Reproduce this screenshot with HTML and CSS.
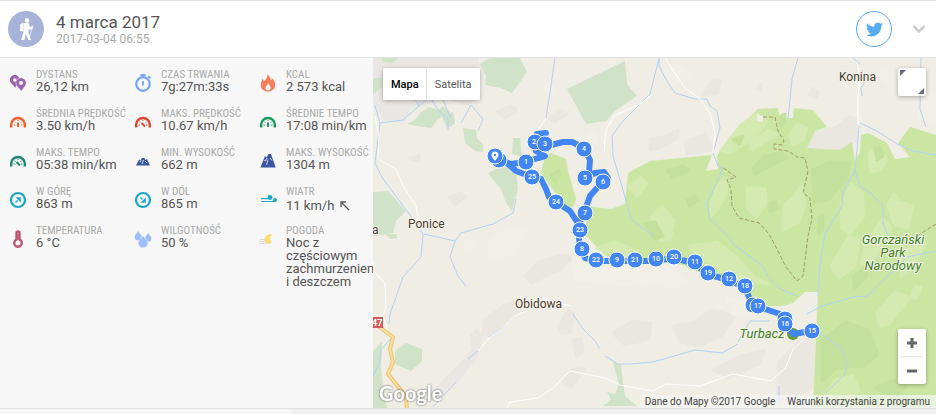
FILE: index.html
```html
<!DOCTYPE html>
<html lang="pl">
<head>
    <meta charset="UTF-8">
    <meta name="viewport" content="width=device-width, initial-scale=1.0">
    <title>4 marca 2017</title>
    <link rel="stylesheet" href="styles.css">
</head>
<body>
    <!-- Header -->
    <header class="header">
        <div class="avatar">
            <svg width="36" height="36" viewBox="0 0 36 36" fill="#fff">
                <circle cx="19" cy="9.500" r="2.300"/>
                <path d="M16 12h4.500l1.800 4.200 2.200-1 .7 1.500-3.700 2.300-1-1v3.500l2.500 7.500h-2.800l-2.400-6.500-1.300 6.500h-3.300l2.300-8z"/>
                <path d="M12.300 13.200l3.200-1.700v9l-3.400-.5z"/>
                <path d="M25 14.500L20.500 29" stroke="#fff" stroke-width=".7"/>
            </svg>
        </div>
        <div class="heading">
            <h1>4 marca 2017</h1>
            <p>2017-03-04 06:55</p>
        </div>
        <button class="twitter" aria-label="Twitter">
            <svg width="17" height="17" viewBox="0 0 24 24" fill="#55acee"><path d="M23.950 4.570a10 10 0 0 1-2.820.770 4.960 4.960 0 0 0 2.160-2.720c-.95.550-2 .960-3.130 1.180a4.920 4.920 0 0 0-8.380 4.480C7.690 8.100 4.070 6.130 1.640 3.160a4.820 4.820 0 0 0-.67 2.480c0 1.710.870 3.210 2.190 4.100a4.900 4.900 0 0 1-2.230-.62v.06a4.920 4.920 0 0 0 3.950 4.830 5 5 0 0 1-2.210.08 4.940 4.940 0 0 0 4.600 3.420A9.870 9.870 0 0 1 0 19.540a13.990 13.990 0 0 0 7.550 2.210c9.050 0 14-7.500 14-13.980 0-.21 0-.42-.02-.63a9.940 9.940 0 0 0 2.460-2.550z"/></svg>
        </button>
        <button class="toggle" aria-label="Zwiń">
            <svg width="14" height="10" viewBox="0 0 14 10"><path d="M1.500 2L7 7.500 12.500 2" fill="none" stroke="#ccc" stroke-width="2.600"/></svg>
        </button>
    </header>

    <svg width="0" height="0" class="defs">
        <symbol id="gauge" viewBox="0 0 18 18">
            <path d="M2.200 14.500v-3.200a6.800 6.300 0 0 1 13.600 0v3.200" fill="none" stroke="currentColor" stroke-width="2.400"/>
            <path d="M4.500 12h1.500M5.500 8.800l1 .7M9 7v1M12.500 8.800l-1 .7M13.500 12H12" stroke="currentColor" stroke-width="1"/>
        </symbol>
        <symbol id="ring" viewBox="0 0 18 18">
            <circle cx="9" cy="9" r="7" fill="none" stroke="currentColor" stroke-width="2.200"/>
        </symbol>
    </svg>

    <main class="content">
        <!-- Stats -->
        <dl class="stats">
            <div class="stat">
                <svg class="icon purple" viewBox="0 0 18 18" fill="currentColor">
                    <path fill-rule="evenodd" d="M5.800 1a5 5 0 0 1 5 5c0 3-3.500 4.500-4.500 8C5 11 .8 9 .8 6a5 5 0 0 1 5-5zm0 3.200a1.800 1.800 0 1 0 0 3.600 1.800 1.800 0 0 0 0-3.600z"/>
                    <path fill-rule="evenodd" stroke="#f7f7f7" stroke-width=".5" d="M12 3.700a5.200 5.200 0 0 1 5.200 5.200c0 3.300-3.500 5-4.800 8.500C11 14.500 6.800 12.300 6.800 8.900A5.200 5.200 0 0 1 12 3.700zm0 3.400a1.800 1.800 0 1 0 0 3.600 1.800 1.800 0 0 0 0-3.600z"/>
                </svg>
                <dt>DYSTANS</dt>
                <dd>26,12 km</dd>
            </div>
            <div class="stat">
                <svg class="icon sky" viewBox="0 0 18 18">
                    <circle cx="9" cy="10" r="6.800" fill="none" stroke="currentColor" stroke-width="2.200"/>
                    <path d="M6.500 1h5M9 1v2M14.200 2.200l2.300 2M9 7v4.500" stroke="currentColor" stroke-width="1.800"/>
                </svg>
                <dt>CZAS TRWANIA</dt>
                <dd>7g:27m:33s</dd>
            </div>
            <div class="stat">
                <svg class="icon coral" viewBox="0 0 18 18" fill="currentColor">
                    <path fill-rule="evenodd" d="M8.500.5c2 1.500 3.500 4 3.300 6 .8-.5 1-1.500 1-2.500 2 1.800 3.700 4.500 3.400 7.500-.4 3.500-3 6-7.200 6s-7-2.500-7.300-6C1.500 8.500 3 6.500 3.800 4.500c.6.800.7 2 1 2.800C7 5.500 8.500 3.500 8.500.5zM9 9c0 2-2.500 2.800-2.500 5 0 1.500 1 2.300 2.500 2.300s2.600-1 2.600-2.300C11.600 12 10 11 9 9z"/>
                </svg>
                <dt>KCAL</dt>
                <dd>2 573 kcal</dd>
            </div>
            <div class="stat">
                <svg class="icon orange" viewBox="0 0 18 18"><use href="#gauge"/><path d="M9 9.500v4.500" stroke="currentColor" stroke-width="2"/></svg>
                <dt>ŚREDNIA PRĘDKOŚĆ</dt>
                <dd>3.50 km/h</dd>
            </div>
            <div class="stat">
                <svg class="icon red" viewBox="0 0 18 18"><use href="#gauge"/><path d="M7.500 10l3.500 3.500" stroke="currentColor" stroke-width="2"/></svg>
                <dt>MAKS. PRĘDKOŚĆ</dt>
                <dd>10.67 km/h</dd>
            </div>
            <div class="stat">
                <svg class="icon green" viewBox="0 0 18 18"><use href="#gauge"/><path d="M9 9.500v4.500" stroke="currentColor" stroke-width="2"/></svg>
                <dt>ŚREDNIE TEMPO</dt>
                <dd>17:08 min/km</dd>
            </div>
            <div class="stat">
                <svg class="icon teal" viewBox="0 0 18 18"><use href="#gauge"/><path d="M7.500 10l3.500 3.500" stroke="currentColor" stroke-width="2"/></svg>
                <dt>MAKS. TEMPO</dt>
                <dd>05:38 min/km</dd>
            </div>
            <div class="stat">
                <svg class="icon navy" viewBox="0 0 18 18" fill="currentColor">
                    <path d="M2 13.500l3-6 1.500 1L8 6h2.500l1 2 1.500-1 3 6.500z"/>
                    <path d="M5.500 10l2-1.500M9.500 8l-1.500 4M11 9l2 2" stroke="#f7f7f7" stroke-width=".8"/>
                </svg>
                <dt>MIN. WYSOKOŚĆ</dt>
                <dd>662 m</dd>
            </div>
            <div class="stat">
                <svg class="icon navy" viewBox="0 0 18 18" fill="currentColor">
                    <path d="M1.500 15.500L6 4l1.500 1.500L9.500 2H12l4.700 13.500z"/>
                    <path d="M5 8l1.500 1L8 6M9 7.500L7.500 13M11 6l2 2.500" stroke="#f7f7f7" stroke-width=".8" fill="none"/>
                </svg>
                <dt>MAKS. WYSOKOŚĆ</dt>
                <dd>1304 m</dd>
            </div>
            <div class="stat">
                <svg class="icon cyan" viewBox="0 0 18 18"><use href="#ring"/><path d="M6.500 11.500l2-2M8.300 7h2.700v2.700z" stroke="currentColor" stroke-width="1.500" fill="currentColor"/></svg>
                <dt>W GÓRĘ</dt>
                <dd>863 m</dd>
            </div>
            <div class="stat">
                <svg class="icon cyan" viewBox="0 0 18 18"><use href="#ring"/><path d="M6.500 6.500l2 2M11 8.300V11H8.300z" stroke="currentColor" stroke-width="1.500" fill="currentColor"/></svg>
                <dt>W DÓŁ</dt>
                <dd>865 m</dd>
            </div>
            <div class="stat">
                <svg class="icon cyan" viewBox="0 0 18 18" fill="currentColor">
                    <circle cx="11" cy="6.500" r="2.400"/>
                    <circle cx="16" cy="9" r="2"/>
                    <path d="M2 7.700h9M2 10.500h14" stroke="currentColor" stroke-width="1.200"/>
                </svg>
                <dt>WIATR</dt>
                <dd class="wind">11 km/h
                    <svg width="10" height="10" viewBox="0 0 10 10" fill="none" stroke="#555" stroke-width="1.300"><path d="M9 9L2 2M1 6V1h5"/></svg>
                </dd>
            </div>
            <div class="stat">
                <svg class="icon rose" viewBox="0 0 18 18">
                    <path d="M7.500 9.500V3a1.500 1.500 0 0 1 3 0v6.500a3.800 3.800 0 1 1-3 0z" fill="none" stroke="currentColor" stroke-width="2.400"/>
                    <path d="M9 4v6" stroke="currentColor" stroke-width="1.500"/>
                </svg>
                <dt>TEMPERATURA</dt>
                <dd>6 °C</dd>
            </div>
            <div class="stat">
                <svg class="icon drops" viewBox="0 0 18 18" fill="currentColor">
                    <path d="M4.200 1C5.500 3.500 7.800 4.800 7.800 7a3.500 3.500 0 0 1-7.100 0C.7 4.800 2.900 3.500 4.200 1z"/>
                    <path d="M14.200 3c1.300 2.200 3.200 3.500 3.200 5.500a3.200 3.200 0 0 1-6.400 0c0-2 2-3.300 3.200-5.500z"/>
                    <path d="M9 5.500c2 3.300 5 4.700 5 7.500a4.900 4.900 0 0 1-9.900 0c0-2.800 3-4.200 4.900-7.500z" stroke="#f7f7f7" stroke-width=".6"/>
                </svg>
                <dt>WILGOTNOŚĆ</dt>
                <dd>50 %</dd>
            </div>
            <div class="stat">
                <svg class="icon moon" viewBox="0 0 18 18" fill="currentColor">
                    <path d="M13 4.500c-2.800 1.500-2.800 6.500 0 7.500-1.500 2.500-6 2.500-7.200-.5-1.200-4 2.200-8 7.200-7z"/>
                    <path d="M1 9.500h5M0 11.500h7M0 13.500h10" stroke="#ddd" stroke-width="1"/>
                </svg>
                <dt>POGODA</dt>
                <dd>Noc z częściowym zachmurzeniem i deszczem</dd>
            </div>
        </dl>

        <!-- Map -->
        <section class="map">
            <svg class="canvas" viewBox="0 0 563 350" preserveAspectRatio="xMidYMid slice">
                <rect width="563" height="350" fill="#efede4"/>
                <!-- terrain -->
                <g fill="#e9e6e4">
                    <path d="M0 0h105l2 12 -10 14 12 12-16 10-22-8-16 6-18 6-6 14-20-4-11-14z"/>
                    <path d="M60 332l24-24 18-20 7-2-6 16-20 24-16 14z"/>
                </g>
                <g class="relief" fill="#eae7e0" stroke="#eae7e0">
                    <path d="M112 262l20-15 16-4 3 8-18 12-12 14-12 0zM98 278l6-6 4 10-8 8zM152 218l14-14 22-7 12 2-12 12-30 14zM185 270l10-18 6 4-4 18-8 2zM190 323l10-12 12 0-14 18zM240 275l20-12 18 2-2 16-24 6zM200 283l8-2 2 12-6 6z"/>
                    <path d="M329 37l12-16 7 2-4 12zM434 91l8-16 22-6 12-10 7 2v22l-16 9zM277 82l16-4 12-6 0 8-18 10-10 2zM312 84l20-8 8 16-26 4zM384 30l4-4 0 6zM440 30l6 6-4 4-6-4zM176 60l12-8 6 4-12 8zM76 139l12-4 4 4-10 8zM36 100l10-2 0 5zM124 54l14-6 6 4-12 8z"/>
                    <path d="M300 268l22-4 16-12 24 6-14 20-20 10-20-4zM340 312l28-14 24-6-6 14-30 14zM405 305l20-20 16-10 0 54-36 18z"/>
                </g>
                <g class="relief" fill="#f2efe7" stroke="#f2efe7">
                    <path d="M115 186l20-16 16 4-10 22-24 6zM200 198l50-8 40 12 10 16-30 10-68-6zM290 14l20-6 6 8-16 12zM92 183l10 2-4 8-6-2z"/>
                    <path d="M384 82l14-18 8 4-8 14zM170 30l8-6 4 10zM214 78l8-4 2 12zM354 240l20 6 10 12-24-2zM277 212l22 0 16 12-20 6zM500 16l14-6 2 16zM545 60l10-30 8 6v28z"/>
                </g>
                <!-- light woods -->
                <g fill="#d0e3c8">
                    <path d="M107 6L117 0h30l7 14-15 21-11-5-16-3 1-10z"/>
                    <path d="M194 31l58-28 2 23 10 12-22 15-9 10-20 3z"/>
                    <path d="M48 54l8-5 10 3 4-4 6 6-12 8-6 8-14-2-10-2 8-4zM68 56l12-2 2 12-8 4zM90 70l13 2 1 8 6 6v8l-8-1-10-8zM58 30l16 2 2 4-16 2zM0 20l10 0 8 8-10 2-8 6z"/>
                    <path d="M115 115l18-9 10 7 2 18-6 22-6-8-5-14zM140 80l7 0 2 18-10-2z"/>
                    <path d="M0 134l15-1 18 20-10 10-3 12-20 3zM8 0h16l-4 5-10-1zM0 293l9-9-1 25 2 20 4 21H0zM22 293l11-8 16 6v12l-11 10-16-7zM12 176h12v4l-6 1z"/>
                    <path d="M240 304l8 2 2 20 2 12 12 10h-34l8-6-4-8 8 2 4-10-4-14z"/>
                </g>
                <!-- national park -->
                <g fill="#cae6a2">
                    <path d="M172 98l6-3 15 6 2 12 8 28-2 7-8 2-25-35z"/>
                    <path d="M213 148l25 3 14-5 3-31 22-12 62-6-6 16 12-2-1-13 13-20 28-27 20-1 2 10h13l1-10 19 2 14 17-12 4-8 17 33 2 12-8 3 19 5-9 1-17 7-2 19 10 8 16 15-2-12-14 12-16 26 8v272H440l5-115h-13l-12 11-10 3-16 0-20-11-17-12-23-7-24-11-33-4-44-5-20-20z"/>
                </g>
                <g class="relief" fill="#d4eab0" stroke="#d4eab0">
                    <path d="M348 93l20-26 16-11 10 8-16 18-22 13zM416 78l8-12 10 4-4 12-10 5zM374 130l8-1 10 2 1 14-10 14-8-8zM468 146l10-20 11 8 2 24-14 18-8-6z"/>
                    <path d="M410 158l2-12 8-6 8-12 4 18-6 18-16 8zM496 96l8-6 10 12-6 10-10 2zM515 146l6-10 6 8 12 4-4 22-14-4z"/>
                    <path d="M458 208l18-30 10 4-4 26-16 12zM492 186l18-26 8 10-18 32-12 4zM528 202l14-22 10 6-14 26-10 6zM504 254l18-20 14 6-20 26-10 2z"/>
                    <path d="M256 128l12-8 6 6-10 12zM279 158l10-10 12 14-4 20-16 0zM338 146l6-18 8-8 2 14-10 18-6 6zM316 188l28-4 18 14 20 22 14 6-30-4-38-22zM224 190l18-6 24 10-14 6zM378 84l18-12 8 4-26 16z"/>
                    <path d="M452 338l10-16 18-4 6 14-20 14h-12zM542 228l6 2-4 10-6 0z"/>
                </g>
                <g class="relief" fill="#c4e09d" stroke="#c4e09d">
                    <path d="M380 110l12-12 16-4 6 6-16 8-16 8zM439 112l18-8 20 0-4 18-18 20-14 2zM294 112l16-4 6 4-16 8zM446 160l4-2 0 12-4 6zM360 82l10-4-4 8zM408 58l4-2 0 8-4 4z"/>
                    <path d="M449 282l24-18 22 8 10 24-14 12-28 2-14 14zM502 90l6 0 2 8-6 4zM502 330l18-8 14 6-12 10zM314 142l8-4 4 4-10 6zM272 166l10-2 8 14-8 4zM397 146l6-2 2 6-8 4zM480 218l12-8 2 8-12 12zM178 118l8-6 0 6-4 6z"/>
                </g>
                <path fill="#efede4" d="M384 55l6 4v5l-6-1z"/>
                <!-- streams -->
                <g class="stream">
                    <path d="M182 0l-5 35-4 25M286 0l-9 36-27 27-11 15 1 20 8 27 10 36 22 17"/>
                    <path d="M286 0v8l8 15 8 12 20 6 12 0 3 7 7 5 3 17-7 25 5 13 4 2-2 8-13 27 3 16 18 17 7 10 28 20 5 11 12 12 17 7"/>
                    <path d="M425 0l-6 21-4 40M480 0l7 6M489 12l2 14-3 4 1 8M486 68l-4 45-12 20-1 15-17 28-5 30-2 32M482 113l5 15 12 8 11 12v17l5 13"/>
                    <path d="M487 65l17 8 20 13 16 7 23 4M548 0l-1 51 6 18M563 193l-29 6-17 17-23 22-14 1-33 10-13 7M444 273l23 16 7 14-2 13-20 20"/>
                    <path d="M2 48l5 17-5 40 8 16 33 44 7 11-2 23-18 20-7 20-6 17-1 10M143 141l-3 14-20 11-32 9-6 8-5 16 8 19 8 10M51 176l31 7"/>
                    <path d="M60 349l12-13 11-12M95 301l10-8M116 279l12-6 12-14M165 240l4-1M200 256l10 15 12 12 5 8M232 298l13 8h12l23-2 42-12 27 3 16-9M365 284l12-21h20"/>
                    <path d="M7 65l23-3 16-14-10-16M46 48l10-8 16-16M57 40l10 14 8 6 0 12M78 60l-8-18M88 65l10-18 12 14-5 12M84 28l6 10 8-4M0 318l6-12 2-14 10-12M406 344v-16"/>
                </g>
                <!-- roads -->
                <g class="way">
                    <path d="M173 60l-10 15M277 38l-10 8-26 12-8 14-2 22M292 0l12 18 8 12 15 11 10 14 5 20-2 20M484 4l3 14-2 22v26"/>
                    <path d="M2 58l4 20-1 23 18 10 7 17 13 20 2 13M0 204l2 10 10 12 1 22-3 11 5 14M105 293l12-14 11-6 12-14 13-6M170 241l28 7M134 350l3-6 28-4 15-10 17-17 35 7 15 7 33 6 13-7 34 2 33-12 38 7 15-14 7-18 17-15"/>
                </g>
                <path class="trail" d="M390 59h12l3 14 6 10-2 4-8-1v5l14 2 9 6 8 1 3 13-5 22 7 5 2 21-4 17-5 40-6 5-11-14-9-18-8-15-10-11-20-5-7-12-1-17-4-9 9-3-14-10M563 166l-19 12"/>
                <path class="highway edge" d="M5 268l15 11-3 12 3 13-5 12 12 15 6 8 1 14"/>
                <path class="highway" d="M5 268l15 11-3 12 3 13-5 12 12 15 6 8 1 14"/>
                <rect x="-8" y="259" width="18" height="11" fill="#d85a5a"/>
                <text class="road" x="-1" y="268">47</text>

                <!-- places -->
                <g class="place">
                    <text x="35" y="170">Ponice</text>
                    <text x="-1" y="176">a</text>
                    <text x="466" y="23">Konina</text>
                    <text x="142" y="250">Obidowa</text>
                </g>
                <g class="place park">
                    <text x="520" y="186">Gorczański</text>
                    <text x="520" y="199">Park</text>
                    <text x="520" y="212">Narodowy</text>
                    <text x="389" y="280">Turbacz</text>
                </g>
                <circle cx="420" cy="276" r="6" fill="#689f38"/>

                <!-- route -->
                <path class="route" d="M122 100l16 6 15-2 12-4 7-2-9-5-2-8 4-9 8-1-9 1 9 8 5 3 12-3 9 0 12 6 6 12-1 12-4 6 10-5 9-1 4 6-5 5-6 5-7 8-5 14-5 12v6l-1 11 2 10 4 9 10 3h60l18-3 21 5 13 11 21 6 16 7 6 12 2 6 6 1 7 3 15 5 5 5v5l8 10 19-3"/>
                <path class="route" d="M133 104l10 9 16 6 9 2 5 10 3 8 7 5 14 9 9 14"/>
                <g class="pins">
                    <circle cx="126" cy="102" r="7"/>
                    <circle cx="122" cy="98" r="7"/>
                    <path d="M122 93.500a3.500 3.500 0 0 1 3.500 3.500c0 2.400-3.500 5.800-3.500 5.800s-3.500-3.400-3.500-5.800a3.500 3.500 0 0 1 3.500-3.500zm0 2.300a1.200 1.200 0 1 0 0 2.400 1.200 1.200 0 0 0 0-2.400z" fill="#fff" fill-rule="evenodd"/>
                    <circle cx="153" cy="104" r="7"/><text x="153" y="106">1</text>
                    <circle cx="162" cy="84" r="7"/><text x="161" y="86">2</text>
                    <circle cx="172" cy="86" r="7"/><text x="172" y="88">3</text>
                    <circle cx="211" cy="91" r="7"/><text x="211" y="93">4</text>
                    <circle cx="212" cy="120" r="7"/><text x="212" y="122">5</text>
                    <circle cx="230" cy="124" r="7"/><text x="230" y="126">6</text>
                    <circle cx="212" cy="155" r="7"/><text x="212" y="157">7</text>
                    <circle cx="159" cy="119" r="7"/><text x="159" y="121">25</text>
                    <circle cx="183" cy="144" r="7"/><text x="183" y="146">24</text>
                    <circle cx="207" cy="172" r="7"/><text x="207" y="174">23</text>
                    <circle cx="209" cy="191" r="7"/><text x="209" y="193">8</text>
                    <circle cx="223" cy="202" r="7"/><text x="223" y="204">22</text>
                    <circle cx="244" cy="202" r="7"/><text x="244" y="204">9</text>
                    <circle cx="262" cy="202" r="7"/><text x="262" y="204">21</text>
                    <circle cx="283" cy="201" r="7"/><text x="283" y="203">10</text>
                    <circle cx="301" cy="199" r="7"/><text x="301" y="201">20</text>
                    <circle cx="322" cy="204" r="7"/><text x="322" y="206">11</text>
                    <circle cx="335" cy="215" r="7"/><text x="335" y="217">19</text>
                    <circle cx="356" cy="221" r="7"/><text x="356" y="223">12</text>
                    <circle cx="372" cy="228" r="7"/><text x="372" y="230">18</text>
                    <circle cx="380" cy="247" r="7"/>
                    <circle cx="385" cy="248" r="7"/><text x="385" y="250">17</text>
                    <circle cx="412" cy="261" r="7"/>
                    <circle cx="412" cy="266" r="7"/><text x="412" y="268">16</text>
                    <circle cx="439" cy="273" r="7"/><text x="439" y="275">15</text>
                </g>
                <text class="google" x="6" y="343">Google</text>
            </svg>

            <div class="map-type">
                <button class="active">Mapa</button>
                <button>Satelita</button>
            </div>
            <button class="fullscreen" aria-label="Pełny ekran">
                <svg width="28" height="28" viewBox="0 0 28 28" fill="#666d78"><path d="M2 2h6L2 8zM26 20v6h-6z"/></svg>
            </button>
            <div class="zoom">
                <button aria-label="Powiększ"><svg width="12" height="12" viewBox="0 0 12 12"><path d="M1 6h10M6 1v10" stroke="#666" stroke-width="3"/></svg></button>
                <button aria-label="Pomniejsz"><svg width="12" height="12" viewBox="0 0 12 12"><path d="M1 6h10" stroke="#666" stroke-width="3"/></svg></button>
            </div>
            <div class="credits">
                <span>Dane do Mapy ©2017 Google</span>
                <a href="#">Warunki korzystania z programu</a>
            </div>
        </section>
    </main>
    <footer class="footer"><div class="footer-tab"></div></footer>
</body>
</html>
```

FILE: styles.css
```css
/* Global Styles */
* {
    box-sizing: border-box;
}

body {
    margin: 0;
    min-height: 100vh;
    display: flex;
    flex-direction: column;
    background: #f0f0f0;
    font-family: Roboto, sans-serif;
    color: #555;
    overflow: hidden;
}

h1, p, dl, dt, dd {
    margin: 0;
}

button {
    padding: 0;
    border: 0;
    background: #fff;
    font-family: inherit;
}

svg {
    display: block;
}

.defs {
    position: absolute;
}

/* Header */
.header {
    display: flex;
    align-items: center;
    height: 58px;
    padding: 0 10px 0 8px;
    background: #fff;
    border-top: 1px solid #e2e2e2;
    border-bottom: 1px solid #e2e2e2;
}

.avatar {
    width: 36px;
    height: 36px;
    border-radius: 50%;
    background: #a8b3d9;
}

.heading {
    flex: 1;
    margin-left: 12px;
}

.heading h1 {
    font-size: 17px;
    line-height: 20px;
    font-weight: 400;
}

.heading p {
    font-size: 12px;
    line-height: 14px;
    color: #aaa;
}

.twitter {
    display: flex;
    align-items: center;
    justify-content: center;
    width: 36px;
    height: 36px;
    border: 1px solid #55acee;
    border-radius: 50%;
}

.toggle {
    margin-left: 20px;
}

/* Stats */
.content {
    display: flex;
    flex: 1;
}

.stats {
    flex: 0 0 373px;
    display: grid;
    grid-template-columns: repeat(3, 125px);
    grid-auto-rows: min-content;
    row-gap: 15px;
    padding: 11px 0 0 9px;
    background: #f7f7f7;
    overflow: hidden;
}

.stat {
    display: grid;
    grid-template-columns: 18px 80px;
    grid-template-rows: 11px auto;
    column-gap: 9px;
    height: 24px;
}

.icon {
    grid-row: 1 / 3;
    width: 18px;
    height: 18px;
    margin-top: 5px;
}

.stat dt {
    font-family: "Roboto Condensed", Roboto, sans-serif;
    font-size: 11px;
    line-height: 11px;
    color: #aaa;
    white-space: nowrap;
}

.stat dd {
    font-size: 13px;
    line-height: 13px;
    white-space: nowrap;
}

.stat:last-child dd {
    white-space: normal;
}

.stat .wind {
    display: flex;
    align-items: center;
    gap: 6px;
    line-height: 17px;
}

.purple { color: #9b62ae; }
.sky { color: #75a5f7; }
.coral { color: #f77f5c; }
.orange { color: #f4602c; }
.red { color: #e04530; }
.green { color: #189c5a; }
.teal { color: #1b8a70; }
.navy { color: #3c56a2; }
.cyan { color: #19a7cc; }
.rose { color: #bf5472; }
.drops { color: #9dbefc; }
.moon { color: #fddc6a; }

/* Map */
.map {
    position: relative;
    flex: 1;
    height: 350px;
    overflow: hidden;
}

.canvas {
    width: 100%;
    height: 100%;
}

.stream, .way, .trail, .highway, .route {
    fill: none;
    stroke-linejoin: round;
}

.relief {
    stroke-width: 3px;
    stroke-linejoin: round;
}

.stream {
    stroke: #b3d1f5;
    stroke-width: 1px;
}

.way {
    stroke: #fff;
    stroke-width: 1px;
}

.trail {
    stroke: #a29a6c;
    stroke-width: 1px;
    stroke-dasharray: 4 2;
}

.highway {
    stroke: #fbdf93;
    stroke-width: 2px;
}

.highway.edge {
    stroke: #e8c27a;
    stroke-width: 4px;
}

.place {
    font-size: 12px;
    fill: #4a402c;
    stroke: #f5f3ec;
    stroke-width: 2px;
    paint-order: stroke;
}

.park {
    font-size: 13px;
    font-style: italic;
    fill: #3d8121;
    text-anchor: middle;
}

.road {
    font-size: 9px;
    font-weight: 700;
    fill: #fff;
}

.route {
    stroke: #4285f4;
    stroke-width: 6px;
    stroke-linecap: round;
}

.pins circle {
    r: 8px;
    fill: #4285f4;
    stroke: #fff;
    stroke-width: 1px;
}

.pins text {
    font-size: 7px;
    font-weight: 500;
    fill: #fff;
    text-anchor: middle;
}

.google {
    font-family: Lato, sans-serif;
    font-size: 20px;
    font-weight: 700;
    fill: #fff;
    filter: drop-shadow(0 0 1px rgba(0, 0, 0, 0.6));
}

/* Map controls */
.map-type, .fullscreen, .zoom {
    position: absolute;
    background: #fff;
    border-radius: 2px;
    box-shadow: 0 1px 4px rgba(0, 0, 0, 0.3);
}

.map-type {
    display: flex;
    top: 10px;
    left: 10px;
}

.map-type button {
    height: 32px;
    padding: 0 8px;
    border-radius: 2px;
    font-size: 11px;
    color: #565656;
}

.map-type .active {
    box-shadow: inset -1px 0 #e2e2e2;
    font-weight: 500;
    color: #000;
}

.fullscreen {
    top: 10px;
    right: 10px;
    width: 28px;
    height: 28px;
}

.zoom {
    right: 10px;
    bottom: 24px;
    width: 28px;
    padding: 0 4px;
}

.zoom button {
    display: flex;
    align-items: center;
    justify-content: center;
    width: 20px;
    height: 27px;
}

.zoom button + button {
    height: 28px;
    border-top: 1px solid #e6e6e6;
}

.credits {
    position: absolute;
    right: 0;
    bottom: 0;
    display: flex;
    gap: 12px;
    padding: 0 6px 0 5px;
    background: rgba(245, 245, 245, 0.7);
    font-size: 10px;
    line-height: 13px;
    color: #444;
}

.credits a {
    color: #444;
    text-decoration: none;
}

/* Footer */
.footer {
    height: 6px;
    border-top: 1px solid #e2e2e2;
}

.footer-tab {
    width: 292px;
    height: 5px;
    background: #f7f7f7;
}
```
